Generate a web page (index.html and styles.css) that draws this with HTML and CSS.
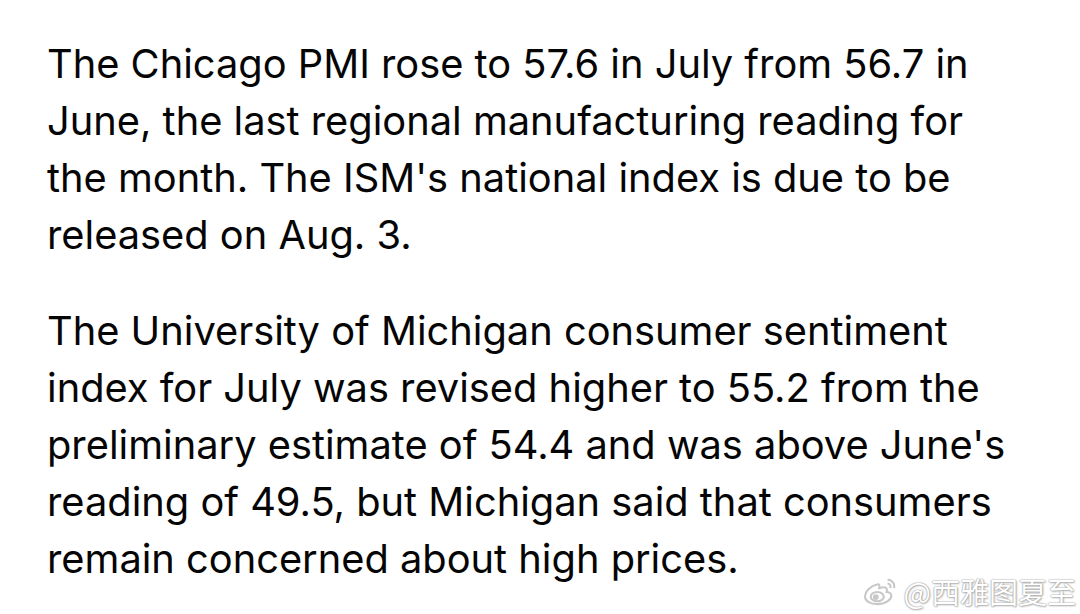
FILE: index.html
```html
<!DOCTYPE html>
<html>
<head>
<meta charset="utf-8">
<link rel="stylesheet" href="styles.css">
</head>
<body>
<main class="article">
  <p class="para">The Chicago PMI rose to 57.6 in July from 56.7 in<br>June, the last regional manufacturing reading for<br>the month. The ISM's national index is due to be<br>released on Aug. 3.</p>
  <p class="para">The University of Michigan consumer sentiment<br>index for July was revised higher to 55.2 from the<br>preliminary estimate of 54.4 and was above June's<br>reading of 49.5, but Michigan said that consumers<br>remain concerned about high prices.</p>
</main>
<div class="watermark">
  <svg class="wb-logo" viewBox="0 0 40 32" width="38" height="30">
    <g fill="none" stroke="#c8c8c8" stroke-width="2.2">
      <path d="M16 9c-6 1-13 7-13 13 0 5 6 8 13 8 9 0 15-5 15-9 0-3-3-4-5-4 1-3 0-5-3-5-2 0-4 1-5 1 1-3-0-5-2-4z" fill="#fff"/>
      <ellipse cx="16" cy="22" rx="7" ry="5" fill="#fff"/>
      <circle cx="14.5" cy="22.5" r="2" fill="#c8c8c8"/>
      <path d="M27 4c4 0 8 3 7 9"/>
      <path d="M27 8c2 0 4 2 3 5"/>
    </g>
  </svg>
  <span class="wb-text">@西雅图夏至</span>
</div>
</body>
</html>
```
FILE: styles.css
```css
html, body {
  margin: 0;
  padding: 0;
  background: #ffffff;
}
body {
  width: 1080px;
  height: 614px;
  overflow: hidden;
  position: relative;
}
.article {
  padding: 35px 0 0 47px;
}
.para {
  margin: 0 0 39px 0;
  font-family: Inter, "Noto Sans", sans-serif;
  font-size: 39.8px;
  line-height: 57px;
  color: #050505;
  white-space: nowrap;
}
.watermark {
  position: absolute;
  right: 4px;
  bottom: 6px;
  display: flex;
  align-items: center;
  gap: 4px;
}
.wb-text {
  font-family: "Noto Sans CJK SC", sans-serif;
  font-size: 29px;
  line-height: 34px;
  color: #ffffff;
  text-shadow: 0 0 1px #909090, 0 0 2px #a8a8a8, 1px 1px 2px #b8b8b8;
}
```
